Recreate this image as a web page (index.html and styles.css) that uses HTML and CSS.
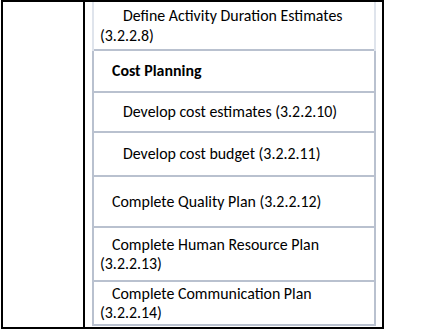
FILE: index.html
```html
<!DOCTYPE html>
<html>
<head>
<meta charset="utf-8">
<link rel="stylesheet" href="styles.css">
</head>
<body>
<div class="frame">
  <div class="left"></div>
  <div class="right">
    <div class="inner">
      <div class="row r1 first"><p class="lvl2">Define Activity Duration Estimates<br>(3.2.2.8)</p></div>
      <div class="row r2"><p class="lvl1 bold">Cost Planning</p></div>
      <div class="row r3"><p class="lvl2">Develop cost estimates (3.2.2.10)</p></div>
      <div class="row r4"><p class="lvl2">Develop cost budget (3.2.2.11)</p></div>
      <div class="row r5"><p class="lvl1">Complete Quality Plan (3.2.2.12)</p></div>
      <div class="row r6"><p class="lvl1">Complete Human Resource Plan<br>(3.2.2.13)</p></div>
      <div class="row r7"><p class="lvl1">Complete Communication Plan<br>(3.2.2.14)</p></div>
    </div>
  </div>
</div>
</body>
</html>
```

FILE: styles.css
```css
html, body {
  margin: 0;
  padding: 0;
  background: #ffffff;
}

body {
  font-family: Carlito, Lato, "Liberation Sans", sans-serif;
  font-size: 15.9px;
  color: #000000;
}

.frame {
  display: flex;
  margin-left: 1px;
  width: 383px;
  height: 329px;
  box-sizing: border-box;
  border: 2px solid #000000;
}

.left {
  width: 80px;
  flex: none;
  border-right: 2px solid #000000;
}

.right {
  flex: 1;
  padding: 0 6px 1px 7px;
}

.inner {
  display: flex;
  flex-direction: column;
  border-left: 2px solid #b9c1cf;
  border-right: 2px solid #b9c1cf;
}

.row {
  display: flex;
  align-items: center;
  border-bottom: 2px solid #b9c1cf;
  padding: 0 6px;
}

.row.first {
  box-shadow: -2px 0 0 #dfe4ec, 2px 0 0 #dfe4ec;
}

.r1 { height: 47px; }
.r2 { height: 40px; }
.r3 { height: 38px; }
.r4 { height: 42px; }
.r5 { height: 49px; }
.r6 { height: 52px; }
.r7 { height: 42px; }

.row p {
  margin: 0;
  line-height: 19.5px;
}

.lvl1 { text-indent: 12px; }
.lvl2 { text-indent: 23px; }

.bold { font-weight: bold; }
```
